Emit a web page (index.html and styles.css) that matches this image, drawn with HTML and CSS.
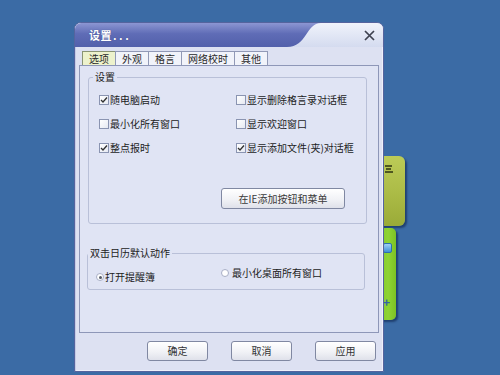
FILE: index.html
```html
<!DOCTYPE html>
<html lang="zh-CN">
<head>
<meta charset="utf-8">
<title>设置</title>
<link rel="stylesheet" href="styles.css">
</head>
<body>
  <div class="dock">
    <div class="dock-tab dock-olive">
      <svg class="dock-menu" width="10" height="10" viewBox="0 0 10 10"><path d="M1 2H8M2 5H7M1 8H9" stroke="#2c3410" stroke-width="1.4"/></svg>
    </div>
    <div class="dock-tab dock-green">
      <span class="dock-icon"></span>
      <span class="dock-plus">+</span>
    </div>
  </div>

  <div class="window">
    <div class="titlebar">
      <svg class="title-bg" width="308" height="24" viewBox="0 0 308 24" preserveAspectRatio="none">
        <defs>
          <linearGradient id="lt" x1="0" y1="0" x2="0" y2="1">
            <stop offset="0" stop-color="#f0f3fb"/>
            <stop offset="1" stop-color="#d4dbef"/>
          </linearGradient>
          <linearGradient id="dk" x1="0" y1="0" x2="0" y2="1">
            <stop offset="0" stop-color="#8c96d2"/>
            <stop offset="0.45" stop-color="#5f6cb6"/>
            <stop offset="1" stop-color="#5260ab"/>
          </linearGradient>
        </defs>
        <rect width="308" height="24" fill="url(#lt)"/>
        <path d="M0 0H246C231 0 232 24 212 24H0Z" fill="url(#dk)"/>
      </svg>
      <span class="title">设置<span class="dots">...</span></span>
      <svg class="close" width="11" height="11" viewBox="0 0 11 11"><path d="M1 1L10 10M10 1L1 10" stroke="#3e4250" stroke-width="1.7"/></svg>
    </div>

    <div class="tabs">
      <span class="tab active">选项</span>
      <span class="tab">外观</span>
      <span class="tab">格言</span>
      <span class="tab">网络校时</span>
      <span class="tab">其他</span>
    </div>

    <div class="panel">
      <fieldset class="group group-settings">
        <legend>设置</legend>
        <div class="checks">
          <label class="opt"><span class="cb on"><svg width="8" height="8" viewBox="0 0 8 8"><path d="M1 4L3 6L7 1.5" stroke="#303030" stroke-width="1.3" fill="none"/></svg></span>随电脑启动</label>
          <label class="opt"><span class="cb"></span>显示删除格言录对话框</label>
          <label class="opt"><span class="cb"></span>最小化所有窗口</label>
          <label class="opt"><span class="cb"></span>显示欢迎窗口</label>
          <label class="opt"><span class="cb on"><svg width="8" height="8" viewBox="0 0 8 8"><path d="M1 4L3 6L7 1.5" stroke="#303030" stroke-width="1.3" fill="none"/></svg></span>整点报时</label>
          <label class="opt"><span class="cb on"><svg width="8" height="8" viewBox="0 0 8 8"><path d="M1 4L3 6L7 1.5" stroke="#303030" stroke-width="1.3" fill="none"/></svg></span>显示添加文件(夹)对话框</label>
        </div>
        <div class="ie-row"><button class="btn btn-ie">在IE添加按钮和菜单</button></div>
      </fieldset>

      <fieldset class="group group-dbl">
        <legend>双击日历默认动作</legend>
        <div class="radios">
          <label class="opt radio-opt"><span class="rb on"></span>打开提醒簿</label>
          <label class="opt radio-opt radio-alt"><span class="rb"></span>最小化桌面所有窗口</label>
        </div>
      </fieldset>
    </div>

    <div class="footer">
      <button class="btn btn-foot">确定</button>
      <button class="btn btn-foot">取消</button>
      <button class="btn btn-foot">应用</button>
    </div>
  </div>
</body>
</html>
```

FILE: styles.css
```css
* { box-sizing: border-box; }

html, body {
  margin: 0;
  padding: 0;
}

body {
  width: 500px;
  height: 375px;
  position: relative;
  overflow: hidden;
  background: #3b6ba5;
  font-family: "Noto Sans CJK SC", "Noto Sans", sans-serif;
  font-size: 10px;
  color: #1c1c1c;
}

/* ---------- side dock (desktop items behind the dialog) ---------- */
.dock {
  position: absolute;
  left: 370px;
  top: 156px;
  display: flex;
  flex-direction: column;
  align-items: flex-start;
  gap: 2px;
}

.dock-tab {
  position: relative;
  box-shadow: 2px 2px 2px rgba(10, 30, 70, 0.55);
}

.dock-olive {
  width: 35px;
  height: 70px;
  border-radius: 0 6px 6px 0;
  background: linear-gradient(180deg, #bccb57 0%, #a9b944 60%, #9aab38 100%);
}

.dock-menu {
  position: absolute;
  left: 14px;
  top: 8px;
}

.dock-green {
  width: 26px;
  height: 92px;
  border-radius: 0 5px 5px 0;
  background: linear-gradient(90deg, #79c020 0%, #8ed334 70%, #7cc224 100%);
}

.dock-icon {
  position: absolute;
  left: 13px;
  top: 15px;
  width: 9px;
  height: 10px;
  border-radius: 2px;
  background: linear-gradient(#9fd0f4, #3f8fd6);
  border: 1px solid #2c6fb0;
}

.dock-plus {
  position: absolute;
  left: 13px;
  top: 68px;
  font-size: 12px;
  line-height: 12px;
  font-weight: bold;
  color: #3464a8;
}

/* ---------- window ---------- */
.window {
  position: absolute;
  left: 74px;
  top: 22px;
  width: 310px;
  height: 350px;
  display: flex;
  flex-direction: column;
  background: #dde1f2;
  border: 1px solid #55649e;
  border-radius: 7px 7px 0 0;
  box-shadow: inset 1px 1px 0 #c4cbe6, inset -1px -1px 0 #eef0fa;
}

.titlebar {
  position: relative;
  height: 24px;
  flex: none;
  display: flex;
  align-items: center;
  justify-content: space-between;
  padding: 0 8px 0 14px;
  border-radius: 6px 6px 0 0;
  overflow: hidden;
}

.title-bg {
  position: absolute;
  left: 0;
  top: 0;
  width: 100%;
  height: 100%;
  z-index: 0;
}

.title {
  position: relative;
  z-index: 1;
  color: #ffffff;
  font-size: 11px;
  font-weight: bold;
  letter-spacing: 0.5px;
  text-shadow: 0 0 1px rgba(40, 50, 110, 0.6);
}

.dots {
  letter-spacing: 2.5px;
  margin-left: 1px;
}

.close {
  position: relative;
  z-index: 1;
  margin-top: 1px;
}

/* ---------- tabs ---------- */
.tabs {
  flex: none;
  display: flex;
  height: 14px;
  margin-top: 4px;
  padding-left: 7px;
}

.tab {
  height: 14px;
  padding: 0 6px;
  line-height: 13px;
  border: 1px solid #9199b6;
  border-bottom: none;
  border-right: none;
  background: #f1f3fa;
  color: #2a2a2a;
  white-space: nowrap;
}

.tab:last-child {
  border-right: 1px solid #9199b6;
}

.tab.active {
  background: #edf2cc;
  border-color: #8a9474;
}

/* ---------- panel ---------- */
.panel {
  flex: none;
  height: 268px;
  margin: 0 4px;
  border: 1px solid #8e97b8;
  background: #e0e4f4;
  display: flex;
  flex-direction: column;
}

.group {
  border: 1px solid #b9c0d8;
  border-radius: 3px;
  min-inline-size: 0;
}

.group legend {
  line-height: 14px;
  padding: 0 2px;
  color: #222;
}

.group-settings {
  margin: 4px 11px 0 8px;
  padding: 4px 21px 14px 10px;
}

.group-settings legend {
  margin-left: -6px;
}

.checks {
  display: grid;
  grid-template-columns: 137px 1fr;
  grid-auto-rows: 24px;
}

.opt {
  display: flex;
  align-items: center;
  gap: 1px;
  white-space: nowrap;
  line-height: 14px;
}

.cb {
  width: 10px;
  height: 10px;
  flex: none;
  border: 1px solid #8a94b1;
  background: linear-gradient(135deg, #ffffff 0%, #e6e9f2 100%);
  display: flex;
  align-items: center;
  justify-content: center;
}

.ie-row {
  display: flex;
  justify-content: flex-end;
  margin-top: 28px;
}

.btn {
  font-family: inherit;
  font-size: 10px;
  color: #333;
  border: 1px solid #8088a2;
  border-radius: 3px;
  background: linear-gradient(180deg, #ffffff 0%, #f1f2f6 55%, #dfe1ea 100%);
  padding: 0;
  line-height: 14px;
  cursor: default;
}

.btn-ie {
  width: 124px;
  height: 21px;
  color: #3a3a3a;
}

.group-dbl {
  margin: 22px 13px 0 7px;
  padding: 9px 0 4px 8px;
}

.group-dbl legend {
  margin-left: -8px;
}

.radios {
  display: flex;
  align-items: flex-start;
  height: 16px;
}

.radio-opt {
  width: 125px;
  height: 16px;
}

.radio-alt {
  margin-top: -4px;
  gap: 3px;
}

.rb {
  width: 8px;
  height: 8px;
  flex: none;
  border-radius: 50%;
  border: 1px solid #a8afc6;
  background: #ffffff;
  display: flex;
  align-items: center;
  justify-content: center;
}

.rb.on::after {
  content: "";
  width: 3px;
  height: 3px;
  border-radius: 50%;
  background: #555a66;
}

/* ---------- footer ---------- */
.footer {
  flex: none;
  display: flex;
  justify-content: flex-end;
  gap: 23px;
  margin-top: 8px;
  padding-right: 7px;
}

.btn-foot {
  width: 61px;
  height: 20px;
}
```
